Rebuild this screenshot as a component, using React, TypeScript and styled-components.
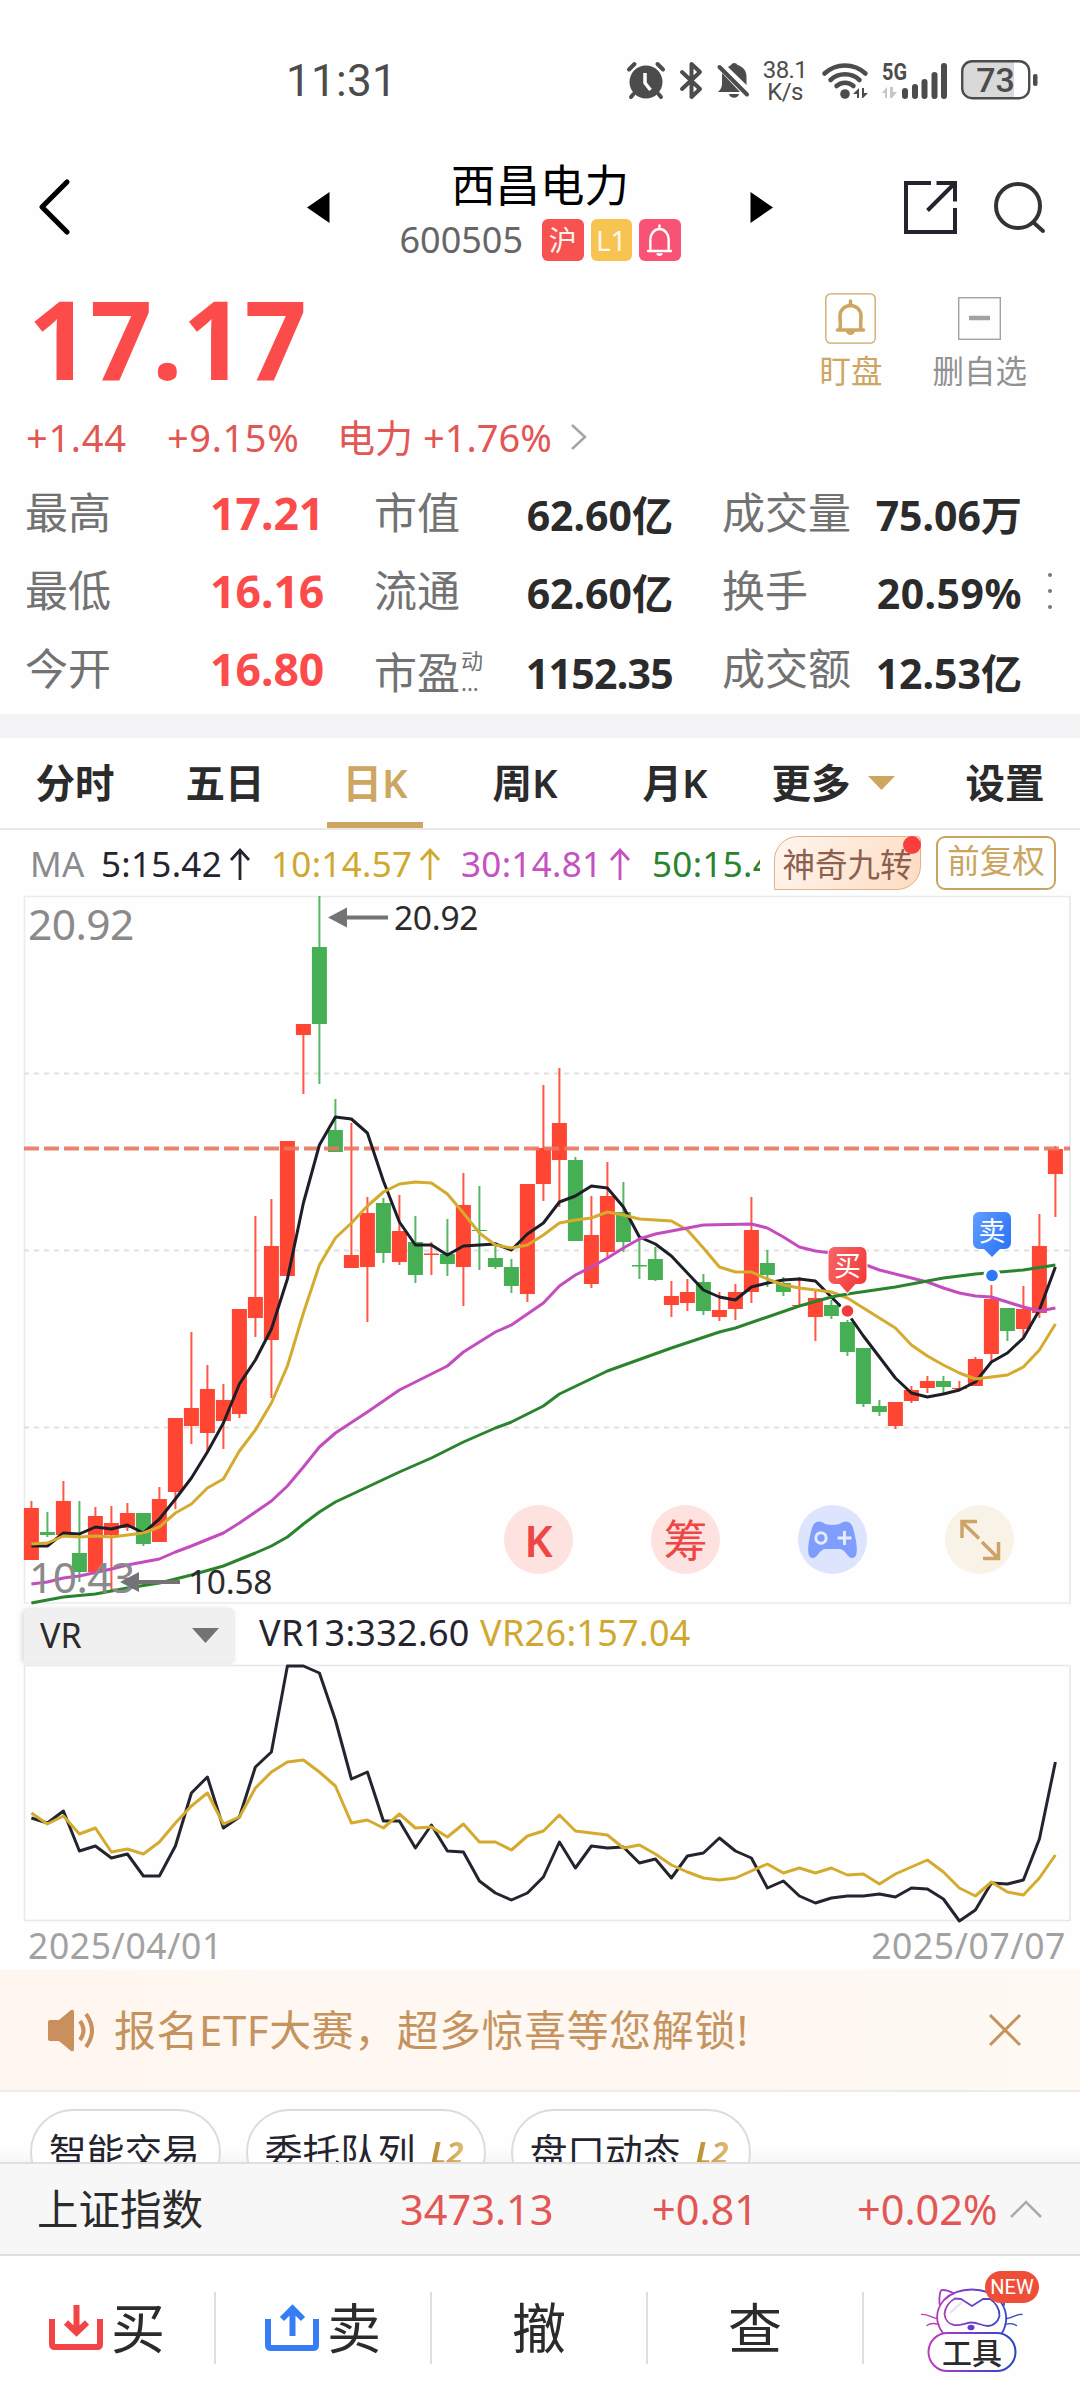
import React from 'react';
import styled, { createGlobalStyle } from 'styled-components';

const RED = '#fc4b4b';
const SOFT_RED = '#e25654';
const GOLD = '#cda662';
const INK = '#24242e';
const YELLOW = '#d0a830';
const UP = '#ff4633';
const DOWN = '#47af53';

const Global = createGlobalStyle`
  * { box-sizing: border-box; }
  body {
    margin: 0;
    background: #fefefe;
    font-family: "Noto Sans", "Noto Sans CJK SC", sans-serif;
    color: #2b2b2b;
  }
  svg { display: block; flex: none; overflow: visible; }
`;

const Page = styled.main`
  width: 1080px;
  height: 2400px;
  overflow: hidden;
  display: flex;
  flex-direction: column;
  background: #fefefe;
  white-space: nowrap;
`;

/* ---------- status bar ---------- */

const StatusBar = styled.header`
  height: 150px;
  padding: 10px 41px 0 286px;
  display: flex;
  align-items: center;
  color: #4c4c4c;
`;
const Clock = styled.span`
  flex: 1;
  padding-top: 2px;
  font: 400 44px/60px Roboto, sans-serif;
  letter-spacing: 0.3px;
`;
const StatusIcon = styled.span<{ $gap: number }>`
  margin-left: ${(p) => p.$gap}px;
`;
const NetSpeed = styled.span`
  width: 46px;
  margin-left: 12px;
  padding-top: 1px;
  font: 400 24px/22px Roboto, sans-serif;
  letter-spacing: -0.6px;
  text-align: center;
`;

/* ---------- title bar ---------- */

const TitleBar = styled.nav`
  height: 130px;
  padding: 0 34px 16px 38px;
  display: flex;
  align-items: center;
`;
const TitleMiddle = styled.div`
  width: 466px;
  margin-left: 237px;
  display: flex;
  align-items: center;
  justify-content: space-between;
`;
const StockId = styled.div`
  display: flex;
  flex-direction: column;
  align-items: center;
  padding-top: 5px;
`;
const StockName = styled.h1`
  margin: 0;
  color: #000;
  font: 400 44.5px/58px "Noto Sans CJK SC", sans-serif;
`;
const StockMeta = styled.div`
  display: flex;
  align-items: center;
  gap: 7px;
  height: 50px;
  margin-top: 3px;
`;
const StockCode = styled.span`
  margin-right: 12px;
  color: #666;
  font-size: 36px;
  line-height: 46px;
`;
const Badge = styled.span<{ $bg: string }>`
  width: 41.5px;
  height: 42px;
  border-radius: 6px;
  background: ${(p) => p.$bg};
  color: #fff8f0;
  display: flex;
  align-items: center;
  justify-content: center;
  font-size: 28px;
  line-height: 40px;
`;
const TitleActions = styled.div`
  margin-left: auto;
  display: flex;
  align-items: center;
  gap: 36px;
`;

/* ---------- quote ---------- */

const Quote = styled.section`
  height: 124px;
  padding: 0 53px 0 28px;
  display: flex;
  justify-content: space-between;
  align-items: flex-start;
`;
const Price = styled.strong`
  color: ${RED};
  font-weight: 700;
  font-size: 109px;
  line-height: 116px;
  letter-spacing: -0.3px;
`;
const QuoteActions = styled.div`
  display: flex;
  gap: 50px;
  padding-top: 11px;
`;
const QuoteAction = styled.div<{ $color: string }>`
  display: flex;
  flex-direction: column;
  align-items: center;
  color: ${(p) => p.$color};
  font-size: 31.5px;
  line-height: 40px;
`;
const ActionIcon = styled.span`
  height: 54px;
  margin-bottom: 6px;
  display: flex;
  align-items: center;
`;
const ChangeRow = styled.div`
  height: 65px;
  padding: 0 0 0 26px;
  display: flex;
  align-items: center;
  color: ${SOFT_RED};
  font-size: 38px;
  line-height: 50px;
`;
const ChangeItem = styled.span<{ $w: number; $gap?: number }>`
  width: ${(p) => p.$w}px;
  letter-spacing: ${(p) => p.$gap || 0}px;
`;

const Stats = styled.section`
  height: 245px;
  padding: 5px 0 6px;
  display: grid;
  grid-template-rows: repeat(3, 78px);
  grid-template-columns: 349px 348px 326px 1fr;
`;
const Stat = styled.div`
  display: flex;
  align-items: center;
  justify-content: space-between;
  padding-left: 25px;
`;
const StatLabel = styled.span<{ $drop?: number }>`
  color: #727272;
  font-size: 43px;
  line-height: 60px;
  display: flex;
  padding-top: ${(p) => p.$drop || 0}px;
`;
const StatHot = styled.b`
  width: 115px;
  margin-right: 24px;
  color: ${RED};
  font-size: 44.5px;
  line-height: 60px;
`;
const StatValue = styled.b<{ $right: number; $drop: number; $gap?: number }>`
  margin-right: ${(p) => p.$right}px;
  padding-top: ${(p) => p.$drop}px;
  font-size: 41px;
  line-height: 60px;
  letter-spacing: ${(p) => p.$gap || 0}px;
`;
const Mini = styled.span`
  display: flex;
  flex-direction: column;
  font-size: 22px;
  line-height: 22px;
  padding: 6px 0 0 1px;
`;
const MoreDots = styled.div`
  grid-row: 1 / span 3;
  grid-column: 4;
  display: flex;
  flex-direction: column;
  align-items: center;
  justify-content: center;
  gap: 12px;
  padding-right: 4px;
`;
const Dot = styled.i`
  width: 4px;
  height: 4px;
  border-radius: 2px;
  background: #777;
`;

const Divider = styled.div`
  height: 24px;
  background: #f3f3f6;
`;

/* ---------- tabs ---------- */

const Tabs = styled.nav`
  height: 92px;
  border-bottom: 2px solid #e8e8e8;
  display: grid;
  grid-template-columns: repeat(5, 150px) 180px 150px;
`;
const Tab = styled.div<{ $active?: boolean }>`
  display: flex;
  flex-direction: column;
  align-items: center;
  padding-top: 15px;
  justify-content: space-between;
  color: ${(p) => (p.$active ? GOLD : '#2b2b2b')};
  font: 700 39.5px/60px "Noto Sans", "Noto Sans CJK SC", sans-serif;
  &::after {
    content: '';
    width: 96px;
    height: 6px;
    background: ${(p) => (p.$active ? GOLD : 'transparent')};
  }
`;
const Inline = styled.span`
  display: flex;
  align-items: center;
  gap: 17px;
  padding-right: 14px;
`;
const Latin = styled.span`
  font-weight: 600;
`;

/* ---------- MA row ---------- */

const MaRow = styled.div`
  height: 66px;
  padding: 0 24px 0 30px;
  display: flex;
  align-items: center;
`;
const MaValues = styled.div`
  width: 730px;
  overflow: hidden;
  display: flex;
  font-size: 35px;
  line-height: 50px;
  letter-spacing: 0.3px;
  padding-top: 2px;
`;
const Ma = styled.span<{ $c: string; $w: number }>`
  flex: none;
  width: ${(p) => p.$w}px;
  color: ${(p) => p.$c};
  display: flex;
  align-items: center;
`;
const NineTurn = styled.div`
  position: relative;
  width: 147px;
  height: 54px;
  margin-left: 14px;
  border: 1.5px solid #e3b08a;
  border-radius: 24px 4px 24px 0;
  background: linear-gradient(120deg, #fff6f0, #fddcc0);
  color: #8d5f50;
  font-size: 32.5px;
  line-height: 56px;
  text-align: center;
  &::after {
    content: '';
    position: absolute;
    right: -1px;
    top: -1px;
    width: 18px;
    height: 18px;
    border-radius: 9px;
    background: #fa3e3e;
  }
`;
const Adjust = styled.div`
  width: 120px;
  height: 54px;
  margin-left: 15px;
  border: 2px solid #c9a55f;
  border-radius: 9px;
  color: #c9a55f;
  font-size: 32.5px;
  line-height: 46px;
  text-align: center;
`;

/* ---------- charts ---------- */

const ChartBox = styled.section`
  position: relative;
  height: 708px;
`;
const FloatButtons = styled.div`
  position: absolute;
  left: 504px;
  top: 609px;
  display: flex;
  gap: 78px;
`;
const FloatButton = styled.span<{ $bg: string }>`
  width: 69px;
  height: 69px;
  border-radius: 50%;
  background: ${(p) => p.$bg};
  color: #ee4545;
  display: flex;
  align-items: center;
  justify-content: center;
  font-size: 44px;
  line-height: 60px;
  font-weight: ${(p) => (p.children === 'K' ? 600 : 400)};
`;
const IndicatorRow = styled.div`
  height: 60px;
  padding: 4px 0 2px 24px;
  display: flex;
  font-size: 36px;
  line-height: 50px;
`;
const Select = styled.div`
  width: 211px;
  height: 54px;
  padding: 0 16px;
  margin-right: 24px;
  display: flex;
  align-items: center;
  justify-content: space-between;
  background: #f0f0f0;
  border-radius: 6px 6px 0 0;
  box-shadow: -2px 1px 5px rgba(0, 0, 0, 0.14);
  font-size: 34px;
`;
const Reading = styled.span<{ $c: string }>`
  width: 221px;
  color: ${(p) => p.$c};
  letter-spacing: 0.3px;
`;
const VrBox = styled.section`
  height: 260px;
`;
const Dates = styled.div`
  height: 46px;
  padding: 0 14px 0 28px;
  display: flex;
  justify-content: space-between;
  color: #a2a2a2;
  font-size: 35.5px;
  line-height: 43px;
  letter-spacing: 0.6px;
`;

/* ---------- lower bars ---------- */

const Notice = styled.div`
  height: 122px;
  padding: 0 59px 0 47px;
  border-bottom: 2px solid #ececec;
  background: linear-gradient(90deg, #fff6f0, #fff9f3);
  display: flex;
  align-items: center;
  color: #c4935e;
  font-size: 41.8px;
  line-height: 60px;
`;
const NoticeText = styled.span`
  flex: 1;
  margin-left: 17px;
  letter-spacing: 0.7px;
`;
const Chips = styled.div`
  height: 70px;
  padding: 17px 30px 0;
  overflow: hidden;
  display: flex;
  gap: 25px;
  background: linear-gradient(#fefefe 80%, #f6f6f6);
`;
const Chip = styled.div`
  height: 86px;
  padding: 0 19px 0 17px;
  border: 2px solid #dcdcdc;
  border-radius: 43px;
  background: #fff;
  color: ${INK};
  display: flex;
  align-items: center;
  font-size: 37.7px;
  line-height: 60px;
`;
const L2 = styled.i`
  margin-left: 13px;
  padding: 0 1px 0 2px;
  color: transparent;
  background: linear-gradient(90deg, #b98a2c, #e0bd78);
  background-clip: text;
  -webkit-background-clip: text;
  font: italic 700 31px/60px "Noto Sans", sans-serif;
`;
const IndexBar = styled.div`
  height: 94px;
  border-top: 2px solid #dfdfdf;
  border-bottom: 2px solid #dfdfdf;
  background: #f7f7f7;
  padding: 0 38px 0 37px;
  display: flex;
  align-items: center;
  font-size: 41.5px;
  line-height: 60px;
`;
const IndexCell = styled.span<{ $w: number; $red?: boolean }>`
  width: ${(p) => p.$w}px;
  color: ${(p) => (p.$red ? SOFT_RED : 'inherit')};
`;
const BottomBar = styled.nav`
  height: 144px;
  padding-top: 36px;
  display: grid;
  grid-template-columns: repeat(5, 1fr);
`;
const BottomItem = styled.div`
  height: 72px;
  border-right: 2px solid #dfdfdf;
  display: flex;
  align-items: center;
  justify-content: center;
  gap: 8px;
  font-size: 54px;
  line-height: 72px;
  &:last-child {
    border-right: none;
  }
`;
const ToolItem = styled(BottomItem)`
  position: relative;
`;
const CatWrap = styled.span`
  position: absolute;
  left: 56px;
  top: -3px;
`;
const NewTag = styled.span`
  position: absolute;
  left: 121px;
  top: -21px;
  width: 54px;
  height: 32px;
  border-radius: 16px;
  background: #ee4e37;
  color: #fff;
  font: 400 20px/32px Roboto, sans-serif;
  text-align: center;
`;
const ToolLabel = styled.span`
  position: absolute;
  left: 64px;
  top: 41px;
  width: 88px;
  text-align: center;
  font: 500 30px/36px "Noto Sans CJK SC", sans-serif;
`;

/* ---------- data ---------- */

// [rising, high, bodyTop, bodyBottom, low] in chart units
const candles: [number, number, number, number, number][] = [
  [1, 1501, 1508, 1560, 1560], [0, 1512, 1532, 1535, 1537], [1, 1481, 1501, 1535, 1535],
  [0, 1501, 1553, 1572, 1582], [1, 1507, 1516, 1572, 1572], [1, 1506, 1523, 1535, 1590],
  [1, 1503, 1513, 1528, 1531], [0, 1513, 1513, 1544, 1546], [1, 1487, 1499, 1542, 1542],
  [1, 1418, 1418, 1492, 1509], [1, 1332, 1408, 1426, 1444], [1, 1365, 1389, 1433, 1452],
  [1, 1384, 1400, 1421, 1449], [1, 1309, 1309, 1414, 1418], [1, 1216, 1297, 1318, 1337],
  [1, 1199, 1246, 1340, 1398], [1, 1141, 1141, 1276, 1276], [1, 1024, 1024, 1035, 1094],
  [0, 896, 947, 1024, 1084], [0, 1099, 1130, 1152, 1152], [1, 1123, 1255, 1268, 1268],
  [1, 1197, 1213, 1267, 1322], [0, 1198, 1203, 1253, 1263], [1, 1195, 1231, 1262, 1265],
  [0, 1216, 1242, 1275, 1283], [1, 1242, 1253.5, 1255, 1275], [0, 1219, 1254, 1264, 1276],
  [1, 1173, 1205, 1267, 1306], [0, 1186, 1230, 1231, 1270], [0, 1242, 1258, 1267, 1269],
  [0, 1259, 1267, 1286, 1293], [1, 1184, 1184, 1294, 1302], [1, 1085, 1148, 1184, 1201],
  [1, 1068, 1123, 1160, 1207], [0, 1157, 1160, 1241, 1241], [1, 1196, 1235, 1284, 1288],
  [1, 1162, 1196, 1252, 1257], [0, 1182, 1212, 1242, 1252], [0, 1238, 1265, 1266.5, 1279],
  [0, 1247, 1259, 1280, 1281], [1, 1281, 1296, 1305, 1317], [1, 1279, 1292, 1303, 1311],
  [0, 1274, 1282, 1311, 1315], [1, 1292, 1310, 1317, 1321], [1, 1284, 1292, 1309, 1320],
  [1, 1197, 1230, 1292, 1303], [0, 1250, 1263, 1275, 1287], [0, 1277, 1283, 1292, 1296],
  [1, 1277, 1305, 1306, 1306], [1, 1291, 1298, 1317, 1341], [0, 1300, 1305, 1316, 1319],
  [0, 1320, 1322, 1352, 1356], [0, 1348, 1348, 1404, 1407], [0, 1400, 1406, 1412, 1416],
  [1, 1402, 1402, 1426, 1429], [1, 1386, 1390, 1401, 1403], [1, 1376, 1381, 1388, 1393],
  [0, 1376, 1381, 1387, 1393], [1, 1381, 1388, 1389, 1391], [1, 1357, 1359, 1386, 1386],
  [1, 1285, 1299, 1354, 1362], [0, 1308, 1308, 1331, 1341], [1, 1286, 1309, 1329, 1337],
  [1, 1214, 1246, 1313, 1318], [1, 1146, 1149, 1174, 1217],
];

const ma5 = [1546, 1546, 1533, 1534, 1527, 1529, 1525, 1533, 1519, 1499, 1478, 1452, 1423, 1384, 1360, 1329, 1279, 1203, 1145, 1117, 1119, 1133, 1181, 1222, 1245, 1245, 1255, 1246, 1245, 1244, 1250, 1234, 1223, 1202, 1196, 1186, 1188, 1207, 1237, 1244, 1256, 1273, 1290, 1297, 1300, 1287, 1283, 1280, 1279, 1281, 1297, 1313, 1336, 1357, 1378, 1393, 1397, 1394, 1390, 1382, 1362, 1353, 1338, 1310, 1267];
const ma10 = [1544, 1543, 1536, 1537, 1536, 1537, 1535, 1533, 1527, 1513, 1504, 1488, 1479, 1451, 1430, 1403, 1366, 1313, 1265, 1238, 1223, 1206, 1192, 1184, 1182, 1183, 1194, 1213, 1233, 1245, 1248, 1245, 1235, 1223, 1220, 1218, 1212, 1215, 1219, 1220, 1221, 1230, 1248, 1267, 1272, 1272, 1279, 1285, 1288, 1290, 1292, 1298, 1308, 1318, 1328, 1345, 1356, 1365, 1373, 1379, 1377, 1375, 1367, 1350, 1324];
const ma30: [number, number][] = [[0, 1584], [1, 1582], [2, 1578], [3, 1576], [5, 1569], [6, 1565], [7, 1562], [8, 1559], [9, 1552], [10, 1546], [12, 1533], [13, 1523], [14, 1512], [15, 1501], [16, 1486], [17, 1467], [18, 1447], [19, 1433], [21, 1412], [23, 1390], [24, 1382], [26, 1366], [27, 1352], [29, 1332], [30, 1325], [32, 1303], [33, 1286], [34, 1275], [35, 1267], [36, 1258], [37, 1248], [38, 1239], [39, 1234], [40, 1231], [41, 1228], [42, 1225], [45, 1224], [46, 1228], [47, 1237], [48, 1247], [49, 1251], [50, 1253], [52, 1264], [53, 1270], [56, 1282], [57, 1288], [58, 1293], [59, 1296], [60, 1297], [61, 1302], [62, 1307], [63, 1311], [64, 1308]];
const ma50: [number, number][] = [[0, 1603], [2, 1597], [4, 1594], [6, 1588], [8, 1583], [10, 1575], [12, 1566], [14, 1553], [15, 1546], [16, 1537], [17, 1524], [18, 1512], [19, 1502], [21, 1487], [23, 1472], [25, 1458], [27, 1442], [29, 1428], [30, 1422], [31, 1414], [32, 1406], [33, 1394], [36, 1371], [40, 1348], [43, 1332], [44, 1328], [48, 1306], [50, 1297], [51, 1294], [54, 1287], [57, 1278], [59, 1274], [62, 1270], [64, 1265]];
const vr13 = [1818, 1823, 1811, 1851, 1846, 1858, 1854, 1876, 1876, 1846, 1793, 1777, 1828, 1817, 1767, 1752, 1666, 1666, 1673, 1720, 1779, 1772, 1821, 1821, 1848, 1825, 1851, 1852, 1881, 1893, 1900, 1893, 1877, 1842, 1868, 1846, 1848, 1847, 1863, 1859, 1878, 1856, 1853, 1838, 1851, 1858, 1888, 1881, 1896, 1903, 1898, 1896, 1896, 1894, 1897, 1888, 1889, 1899, 1921, 1910, 1883, 1884, 1880, 1839, 1762];
const vr26 = [1813, 1824, 1816, 1834, 1828, 1852, 1849, 1854, 1842, 1823, 1806, 1793, 1824, 1817, 1788, 1772, 1762, 1760, 1772, 1786, 1823, 1820, 1828, 1814, 1828, 1827, 1837, 1824, 1842, 1842, 1850, 1836, 1831, 1815, 1831, 1833, 1835, 1848, 1845, 1854, 1865, 1872, 1878, 1880, 1878, 1871, 1864, 1873, 1868, 1873, 1868, 1875, 1874, 1884, 1874, 1867, 1860, 1872, 1888, 1896, 1882, 1892, 1895, 1878, 1855];

const xAt = (i: number) => 31.4 + i * 16;
const series = (ys: number[]) => ys.map((y, i) => `${xAt(i)},${y}`).join(' ');
const sparse = (ps: [number, number][]) => ps.map(([i, y]) => `${xAt(i)},${y}`).join(' ');

/* ---------- drawings ---------- */

const UpArrow = ({ color }: { color: string }) => (
  <svg width="22" height="34" viewBox="0 0 22 34" fill="none" stroke={color} strokeWidth="2.8" style={{ marginLeft: 7 }}>
    <path d="M11 33V3M2 13l9-10 9 10" />
  </svg>
);

const Bell = ({ size, stroke, color }: { size: number; stroke: number; color: string }) => (
  <svg width={size} height={size} viewBox="0 0 36 36" fill="none" stroke={color} strokeWidth={stroke} strokeLinejoin="round" strokeLinecap="round">
    <path d="M18 1.5v3M5.500 29.500h25M8 29.500V17a10 11.500 0 0 1 20 0v12.500" />
    <path d="M14.500 32h7a3.500 3 0 0 1-7 0z" fill={color} stroke="none" />
  </svg>
);

const ArrowNote = ({ x, y, textX, text }: { x: number; y: number; textX: number; text: string }) => (
  <g>
    <path d={`M${x} ${y}l19-10v8h41v4h-41v8z`} fill="#737373" />
    <text x={textX} y={y + 12} fontSize="33.500" letterSpacing="-0.300" fill="#2b2b2b">{text}</text>
  </g>
);

const Marker = ({ x, y, tip, dot, text, from, to }: { x: number; y: number; tip: number; dot: number; text: string; from: string; to: string }) => (
  <g>
    <defs>
      <linearGradient id={`m${x}`} x1="0" x2="1" y1="0" y2="0.600">
        <stop offset="0" stopColor={from} />
        <stop offset="1" stopColor={to} />
      </linearGradient>
    </defs>
    <circle cx={x} cy={dot} r="8.500" fill="#fff" />
    <circle cx={x} cy={dot} r="5.800" fill={to} />
    <path
      d={`M${x - 13} ${y}h26a6 6 0 0 1 6 6v25a6 6 0 0 1-6 6h-5l-8 ${tip - y - 37}l-8-${tip - y - 37}h-5a6 6 0 0 1-6-6v-25a6 6 0 0 1 6-6z`}
      fill={`url(#m${x})`}
      stroke="#fff"
      strokeWidth="2"
      paintOrder="stroke"
    />
    <text x={x} y={y + 28.500} textAnchor="middle" fontSize="27" fill="#fff">{text}</text>
  </g>
);

const KChart = () => (
  <svg width="1080" height="708" viewBox="0 896 1080 708" fontFamily='"Noto Sans", "Noto Sans CJK SC", sans-serif'>
    <path d="M24.500 1603V896.500H1069.500M24 1603H1070" fill="none" stroke="#ebebeb" strokeWidth="1.500" />
    <path d="M1070 896V1604" stroke="#ececec" strokeWidth="2" />
    <path d="M24 1073.500H1070M24 1250.500H1070M24 1427.500H1070" stroke="#e0e0e0" strokeWidth="2" strokeDasharray="5 5" />
    {candles.map(([rise, high, top, bottom, low], i) => (
      <g key={i} fill={rise ? UP : DOWN}>
        <rect x={xAt(i) - 1} y={high} width="2" height={low - high} opacity="0.900" />
        <rect x={xAt(i) - 7.500} y={top} width="15" height={bottom - top} />
      </g>
    ))}
    <path d="M24 1148.500H1070" stroke="#e9775f" strokeOpacity="0.900" strokeWidth="4" strokeDasharray="15 5" />
    <g fill="none" strokeWidth="3" strokeLinejoin="round">
      <polyline points={series(ma5)} stroke="#1e1e28" />
      <polyline points={series(ma10)} stroke="#d4ab2e" />
      <polyline points={sparse(ma30)} stroke="#c44dbe" />
      <polyline points={sparse(ma50)} stroke="#2a832d" />
    </g>
    <text x="28" y="940" fontSize="42.500" letterSpacing="-0.600" fill="#8a8a8a">20.92</text>
    <text x="29" y="1593" fontSize="42.500" letterSpacing="-0.600" fill="#8a8a8a">10.43</text>
    <ArrowNote x={328} y={917.5} textX={394} text="20.92" />
    <ArrowNote x={120} y={1582} textX={188} text="10.58" />
    <Marker x={847.5} y={1247} tip={1293} dot={1311} text="买" from="#f86666" to="#f23c3c" />
    <Marker x={992} y={1212} tip={1257} dot={1275.5} text="卖" from="#629cff" to="#2d78f6" />
  </svg>
);

const VrChart = () => (
  <svg width="1080" height="260" viewBox="0 1664 1080 260">
    <path d="M24.500 1920V1665.500H1069.500M24 1920.500H1070" fill="none" stroke="#e8e8e8" strokeWidth="1.500" />
    <path d="M1070 1665V1921" stroke="#ececec" strokeWidth="2" />
    <g fill="none" strokeWidth="3" strokeLinejoin="round">
      <polyline points={series(vr13)} stroke={INK} />
      <polyline points={series(vr26)} stroke="#d4ab2e" />
    </g>
  </svg>
);

const Cat = () => (
  <svg width="106" height="84" viewBox="0 0 106 84" fill="none">
    <defs>
      <linearGradient id="cat" x1="8" x2="96" y1="0" y2="0" gradientUnits="userSpaceOnUse">
        <stop offset="0" stopColor="#c33bb8" />
        <stop offset="0.500" stopColor="#7040c8" />
        <stop offset="1" stopColor="#2348c4" />
      </linearGradient>
    </defs>
    <g stroke="url(#cat)" strokeWidth="1.800" strokeLinecap="round" strokeLinejoin="round">
      <rect x="8.500" y="44" width="87" height="38" rx="19" strokeWidth="2" />
      <path d="M23 44C15 34 15 21 24 11C38-3 66-3 79 11C88 21 88 34 82 44" />
      <path d="M19.500 15C19 8 20 1 22 .800C27 1 30 2 34 4.500M84 16v-4" />
      <path d="M35 9.500L41 10L52 17L63 10L70 10C75 13 80 20 79.500 27C78 33 73 37 68 37C62 37 58 33.500 52 33.500C46 33.500 41 37 34 36C28 35 25 30 24.500 25C25 18 30 12 35 9.500Z" />
      <path d="M1.500 25.500C8 25 12 29 17 29.500M7 36.500C10 34 14 34 19 35.500M102 25.500C96 25 92 29 87 29.500M96.500 36.500C93 34 90 34 85 35.500" strokeWidth="1.300" />
    </g>
    <path d="M30 24L42 13" stroke="#dfe3f8" strokeWidth="2" />
    <ellipse cx="51" cy="38.500" rx="3.500" ry="2.800" fill="#6838c8" />
  </svg>
);

export default function App() {
  return (
    <Page>
      <Global />
      <StatusBar>
        <Clock>11:31</Clock>
        <StatusIcon $gap={0}>
          <svg width="38" height="37" viewBox="0 0 38 37">
            <circle cx="19" cy="20" r="16.500" fill="#4c4c4c" />
            <path d="M2 7.500L7.500 2M36 7.500L30.500 2M6.500 32l-2.500 3M31.500 32l2.500 3" stroke="#4c4c4c" strokeWidth="4" strokeLinecap="round" />
            <path d="M18 11v10l5.500 7" fill="none" stroke="#fefefe" strokeWidth="3.500" />
          </svg>
        </StatusIcon>
        <StatusIcon $gap={15}>
          <svg width="23" height="37" viewBox="0 0 23 37" fill="none" stroke="#4c4c4c" strokeWidth="4" strokeLinejoin="round" strokeLinecap="round">
            <path d="M2 10l18 17-8.500 8V2l8.500 8L2 27" />
          </svg>
        </StatusIcon>
        <StatusIcon $gap={14}>
          <svg width="33" height="37" viewBox="0 0 33 37" fill="#4c4c4c">
            <path d="M11 5l3-2a3.500 3 0 0 1 6.500 0c6 2 9 6 9 12v8zM5 11l18 19H1c3-3 4-5 4-9zM12 32h10c-1 5-9 5-10 0z" />
            <path d="M2.500 5L30 32.500" stroke="#4c4c4c" strokeWidth="4" strokeLinecap="round" />
          </svg>
        </StatusIcon>
        <NetSpeed>38.1<br />K/s</NetSpeed>
        <StatusIcon $gap={14}>
          <svg width="48" height="37" viewBox="0 0 48 37" fill="none" stroke="#4c4c4c" strokeWidth="4.500" strokeLinecap="round">
            <path d="M2.500 11.500a30 30 0 0 1 41 0M8.500 18a21.500 21.500 0 0 1 29 0M14.500 24a12.500 12.500 0 0 1 17 0" />
            <circle cx="23" cy="32" r="4.800" fill="#4c4c4c" stroke="none" />
            <path d="M31 32l6-6v10h-2v-4zM40 26v10h1l5-5h-4v-5z" fill="#4c4c4c" stroke="none" />
          </svg>
        </StatusIcon>
        <StatusIcon $gap={12}>
          <svg width="66" height="37" viewBox="0 0 66 37">
            <text x="0" y="18" fontSize="23.500" fontWeight="700" fontFamily="Roboto, sans-serif" fill="#4c4c4c" textLength="25" lengthAdjust="spacingAndGlyphs">5G</text>
            <path d="M0 31l5-6v11H3v-5zM8 25v11h2l5-6h-4v-5z" fill="#c6c6c6" />
            <path d="M23 29v5M33 25v9M42.500 20v14M52.500 13v21M62 4v30" stroke="#4c4c4c" strokeWidth="6" strokeLinecap="round" />
          </svg>
        </StatusIcon>
        <StatusIcon $gap={13}>
          <svg width="78" height="40" viewBox="0 0 78 40">
            <path d="M10 2h43v36H10a8 8 0 0 1-8-8V10a8 8 0 0 1 8-8z" fill="#d9d9d9" />
            <rect x="1.200" y="1.200" width="67" height="37" rx="10" fill="none" stroke="#4c4c4c" strokeWidth="2.400" />
            <rect x="72" y="14" width="4.500" height="12" rx="2" fill="#4c4c4c" />
            <text x="34.500" y="32" fontSize="34" fontWeight="500" fontFamily="Roboto, sans-serif" textAnchor="middle" fill="#4c4c4c">73</text>
          </svg>
        </StatusIcon>
      </StatusBar>

      <TitleBar>
        <svg width="32" height="56" viewBox="0 0 32 56" fill="none" stroke="#000" strokeWidth="5.200" strokeLinecap="round" strokeLinejoin="round">
          <path d="M29 3L4 28l25 25" />
        </svg>
        <TitleMiddle>
          <svg width="23" height="31" viewBox="0 0 23 31"><path d="M22.500 0v31L0 15.500z" /></svg>
          <StockId>
            <StockName>西昌电力</StockName>
            <StockMeta>
              <StockCode>600505</StockCode>
              <Badge $bg="#f75150">沪</Badge>
              <Badge $bg="#f7c351">L1</Badge>
              <Badge $bg="#f85374"><Bell size={33} stroke={2.6} color="#fff" /></Badge>
            </StockMeta>
          </StockId>
          <svg width="23" height="31" viewBox="0 0 23 31"><path d="M.500 0v31L23 15.500z" /></svg>
        </TitleMiddle>
        <TitleActions>
          <svg width="53" height="53" viewBox="0 0 53 53" fill="none" stroke={INK} strokeWidth="4">
            <path d="M27 2H2v49h49V27M32.500 2H51v18.500M50 3L23.500 29.500" />
          </svg>
          <svg width="53" height="53" viewBox="0 0 53 53" fill="none" stroke="#333" strokeWidth="4" strokeLinecap="round">
            <circle cx="25" cy="25" r="22" />
            <path d="M40.500 41.500l9.500 8.500" />
          </svg>
        </TitleActions>
      </TitleBar>

      <Quote>
        <Price>17.17</Price>
        <QuoteActions>
          <QuoteAction $color={GOLD}>
            <ActionIcon>
              <svg width="51" height="51" viewBox="0 0 51 51" fill="none" stroke={GOLD}>
                <rect x="0.800" y="0.800" width="49.400" height="49.400" rx="5" strokeWidth="1.300" />
                <path d="M25.500 8v3M12.500 37h26M15 36c1-4 0-8 0-13a10.500 10.500 0 0 1 21 0c0 5-1 9 0 13" strokeWidth="3.600" strokeLinecap="round" />
                <path d="M21 38h9a4.500 4 0 0 1-9 0z" fill={GOLD} stroke="none" />
              </svg>
            </ActionIcon>
            盯盘
          </QuoteAction>
          <QuoteAction $color="#929292">
            <ActionIcon>
              <svg width="43" height="43" viewBox="0 0 43 43" fill="none" stroke="#a2a2a2">
                <rect x="0.700" y="0.700" width="41.600" height="41.600" strokeWidth="1.400" />
                <path d="M11 21H32" strokeWidth="4.500" />
              </svg>
            </ActionIcon>
            删自选
          </QuoteAction>
        </QuoteActions>
      </Quote>
      <ChangeRow>
        <ChangeItem $w={141} $gap={0.7}>+1.44</ChangeItem>
        <ChangeItem $w={170} $gap={0.6}>+9.15%</ChangeItem>
        <ChangeItem $w={86}>电力</ChangeItem>
        <ChangeItem $w={147}>+1.76%</ChangeItem>
        <svg width="18" height="26" viewBox="0 0 18 26" fill="none" stroke="#a5a5a5" strokeWidth="2.500"><path d="M2 1l13 12L2 25" /></svg>
      </ChangeRow>

      <Stats>
        <Stat><StatLabel>最高</StatLabel><StatHot>17.21</StatHot></Stat>
        <Stat><StatLabel>市值</StatLabel><StatValue $right={24} $drop={3}>62.60亿</StatValue></Stat>
        <Stat><StatLabel>成交量</StatLabel><StatValue $right={1} $drop={3}>75.06万</StatValue></Stat>
        <MoreDots><Dot /><Dot /><Dot /></MoreDots>
        <Stat><StatLabel>最低</StatLabel><StatHot>16.16</StatHot></Stat>
        <Stat><StatLabel>流通</StatLabel><StatValue $right={24} $drop={3}>62.60亿</StatValue></Stat>
        <Stat><StatLabel>换手</StatLabel><StatValue $right={1} $drop={4} $gap={0.5}>20.59%</StatValue></Stat>
        <Stat><StatLabel>今开</StatLabel><StatHot>16.80</StatHot></Stat>
        <Stat>
          <StatLabel $drop={7}>市盈<Mini><span>动</span><span>...</span></Mini></StatLabel>
          <StatValue $right={24} $drop={7} $gap={-0.7}>1152.35</StatValue>
        </Stat>
        <Stat><StatLabel>成交额</StatLabel><StatValue $right={1} $drop={7}>12.53亿</StatValue></Stat>
      </Stats>
      <Divider />

      <Tabs>
        <Tab>分时</Tab>
        <Tab>五日</Tab>
        <Tab $active><span>日<Latin>K</Latin></span></Tab>
        <Tab><span>周<Latin>K</Latin></span></Tab>
        <Tab><span>月<Latin>K</Latin></span></Tab>
        <Tab>
          <Inline>
            更多
            <svg width="27" height="14" viewBox="0 0 27 14"><path d="M0 0h27L13.500 14z" fill={GOLD} /></svg>
          </Inline>
        </Tab>
        <Tab>设置</Tab>
      </Tabs>

      <MaRow>
        <MaValues>
          <Ma $c="#8a8a90" $w={71}>MA</Ma>
          <Ma $c={INK} $w={170}>5:15.42<UpArrow color={INK} /></Ma>
          <Ma $c={YELLOW} $w={190}>10:14.57<UpArrow color={YELLOW} /></Ma>
          <Ma $c="#c452c0" $w={191}>30:14.81<UpArrow color="#c452c0" /></Ma>
          <Ma $c="#2a832d" $w={190}>50:15.41</Ma>
        </MaValues>
        <NineTurn>神奇九转</NineTurn>
        <Adjust>前复权</Adjust>
      </MaRow>

      <ChartBox>
        <KChart />
        <FloatButtons>
          <FloatButton $bg="#fee2e0">K</FloatButton>
          <FloatButton $bg="#fee2e0">筹</FloatButton>
          <FloatButton $bg="#dce4fe">
            <svg width="51" height="38" viewBox="0 0 51 38">
              <path d="M12 .500C16 .500 17 4 25.500 4S35 .500 39 .500C45 1 46 6 48 15C50 24 51.500 36 46 37C41 38 38 28 33 28H18C13 28 10 38 5 37C-.500 36 1 24 3 15C5 6 6 1 12 .500Z" fill="#7f9dfc" />
              <circle cx="14" cy="17" r="5.200" fill="none" stroke="#e6ecff" strokeWidth="3" />
              <path d="M37.500 10v14M30.500 17h14" stroke="#e6ecff" strokeWidth="3" />
            </svg>
          </FloatButton>
          <FloatButton $bg="#f9f2e7">
            <svg width="42" height="42" viewBox="0 0 42 42" fill="none" stroke="#cda368" strokeWidth="3.500">
              <path d="M18 2.500H3V19M3 3l17 16.500M24 39.500h15.500V23M39 39L23 23" />
            </svg>
          </FloatButton>
        </FloatButtons>
      </ChartBox>

      <IndicatorRow>
        <Select>
          VR
          <svg width="27" height="15" viewBox="0 0 27 15"><path d="M0 0h27L13.500 15z" fill="#737373" /></svg>
        </Select>
        <Reading $c={INK}>VR13:332.60</Reading>
        <Reading $c={YELLOW}>VR26:157.04</Reading>
      </IndicatorRow>
      <VrBox><VrChart /></VrBox>
      <Dates><span>2025/04/01</span><span>2025/07/07</span></Dates>

      <Notice>
        <svg width="50" height="43" viewBox="0 0 50 43" fill="#c98f5c">
          <path d="M3 11h9L24 1q3-1 3 2v37q0 3-3 2L12 32H3q-2 0-2-2V13q0-2 2-2z" />
          <path d="M33 12q7 9.500 0 19M39 5q12 16.500 0 33" fill="none" stroke="#c98f5c" strokeWidth="4" />
        </svg>
        <NoticeText>报名ETF大赛，超多惊喜等您解锁!</NoticeText>
        <svg width="32" height="32" viewBox="0 0 32 32" fill="none" stroke="#c4935e" strokeWidth="3"><path d="M1 1l30 30M31 1L1 31" /></svg>
      </Notice>

      <Chips>
        <Chip>智能交易</Chip>
        <Chip>委托队列<L2>L2</L2></Chip>
        <Chip>盘口动态<L2>L2</L2></Chip>
      </Chips>

      <IndexBar>
        <IndexCell $w={363}>上证指数</IndexCell>
        <IndexCell $w={252} $red>3473.13</IndexCell>
        <IndexCell $w={205} $red>+0.81</IndexCell>
        <IndexCell $w={153} $red>+0.02%</IndexCell>
        <svg width="32" height="18" viewBox="0 0 32 18" fill="none" stroke="#aaa" strokeWidth="2.500"><path d="M1 17L16 2l15 15" /></svg>
      </IndexBar>

      <BottomBar>
        <BottomItem>
          <svg width="54" height="46" viewBox="0 0 54 46" fill="none" stroke="#f24444" strokeWidth="6">
            <path d="M3 14v25q0 3 3 3h42q3 0 3-3V14M27.500 0v26M17 17.500l10.500 10 10.500-10" />
          </svg>
          买
        </BottomItem>
        <BottomItem>
          <svg width="54" height="48" viewBox="0 0 54 48" fill="none" stroke="#357cf5" strokeWidth="6">
            <path d="M3 15v26q0 3 3 3h42q3 0 3-3V15M27.500 32V5M17 15l10.500-10.500 10.500 10.500" />
          </svg>
          卖
        </BottomItem>
        <BottomItem>撤</BottomItem>
        <BottomItem>查</BottomItem>
        <ToolItem>
          <CatWrap><Cat /></CatWrap>
          <ToolLabel>工具</ToolLabel>
          <NewTag>NEW</NewTag>
        </ToolItem>
      </BottomBar>
    </Page>
  );
}
